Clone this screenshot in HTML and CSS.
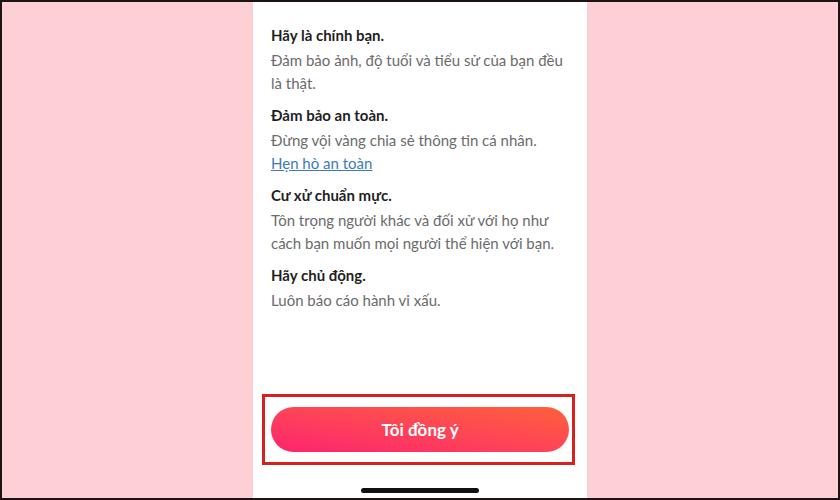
FILE: index.html
```html
<!DOCTYPE html>
<html lang="vi">
<head>
<meta charset="utf-8">
<link rel="stylesheet" href="styles.css">
</head>
<body>
<div class="frame">
  <div class="phone">
    <div class="content">
      <section class="rule">
        <h3 class="title">Hãy là chính bạn.</h3>
        <p class="desc">Đảm bảo ảnh, độ tuổi và tiểu sử của bạn đều là thật.</p>
      </section>
      <section class="rule">
        <h3 class="title">Đảm bảo an toàn.</h3>
        <p class="desc">Đừng vội vàng chia sẻ thông tin cá nhân.<br><a class="link" href="#">Hẹn hò an toàn</a></p>
      </section>
      <section class="rule">
        <h3 class="title">Cư xử chuẩn mực.</h3>
        <p class="desc">Tôn trọng người khác và đối xử với họ như cách bạn muốn mọi người thể hiện với bạn.</p>
      </section>
      <section class="rule">
        <h3 class="title">Hãy chủ động.</h3>
        <p class="desc">Luôn báo cáo hành vi xấu.</p>
      </section>
    </div>
    <div class="highlight">
      <button class="agree">Tôi đồng ý</button>
    </div>
    <div class="home"></div>
  </div>
</div>
</body>
</html>
```
FILE: styles.css
```css
* { box-sizing: border-box; }
html, body { margin: 0; padding: 0; }
body { width: 840px; height: 500px; overflow: hidden; font-family: Lato, "Open Sans", sans-serif; }
.frame {
  width: 840px; height: 500px;
  border: 2px solid #1c1314;
  background: #fdd0d5;
  display: flex; justify-content: center;
}
.phone {
  width: 334px; height: 100%;
  background: #ffffff;
  display: flex; flex-direction: column;
}
.content {
  flex: 1;
  padding: 22px 14px 0 18px;
  display: flex; flex-direction: column; gap: 10px;
}
.rule { margin: 0; }
.title {
  margin: 0 0 3px;
  font-size: 15px; line-height: 22px; font-weight: 700;
  color: #1f1f1f;
}
.desc {
  margin: 0;
  font-size: 15px; line-height: 22.5px;
  color: #6b6b6b;
}
.link { color: #3b7cb8; text-decoration: underline; }
.highlight {
  margin: 0 12px 0 9px;
  border: 3px solid #d8211f;
  padding: 10px 3px 10px 6px;
}
.agree {
  display: block; width: 100%; height: 45px;
  border: 0; border-radius: 23px;
  background: linear-gradient(to top right, #fd2470 0%, #fe4457 50%, #ff603a 100%);
  color: #ffffff;
  font-family: inherit; font-size: 17px; font-weight: 700;
}
.home {
  width: 118px; height: 5px;
  margin: 23px auto 5px;
  border-radius: 3px;
  background: #111111;
}
```
